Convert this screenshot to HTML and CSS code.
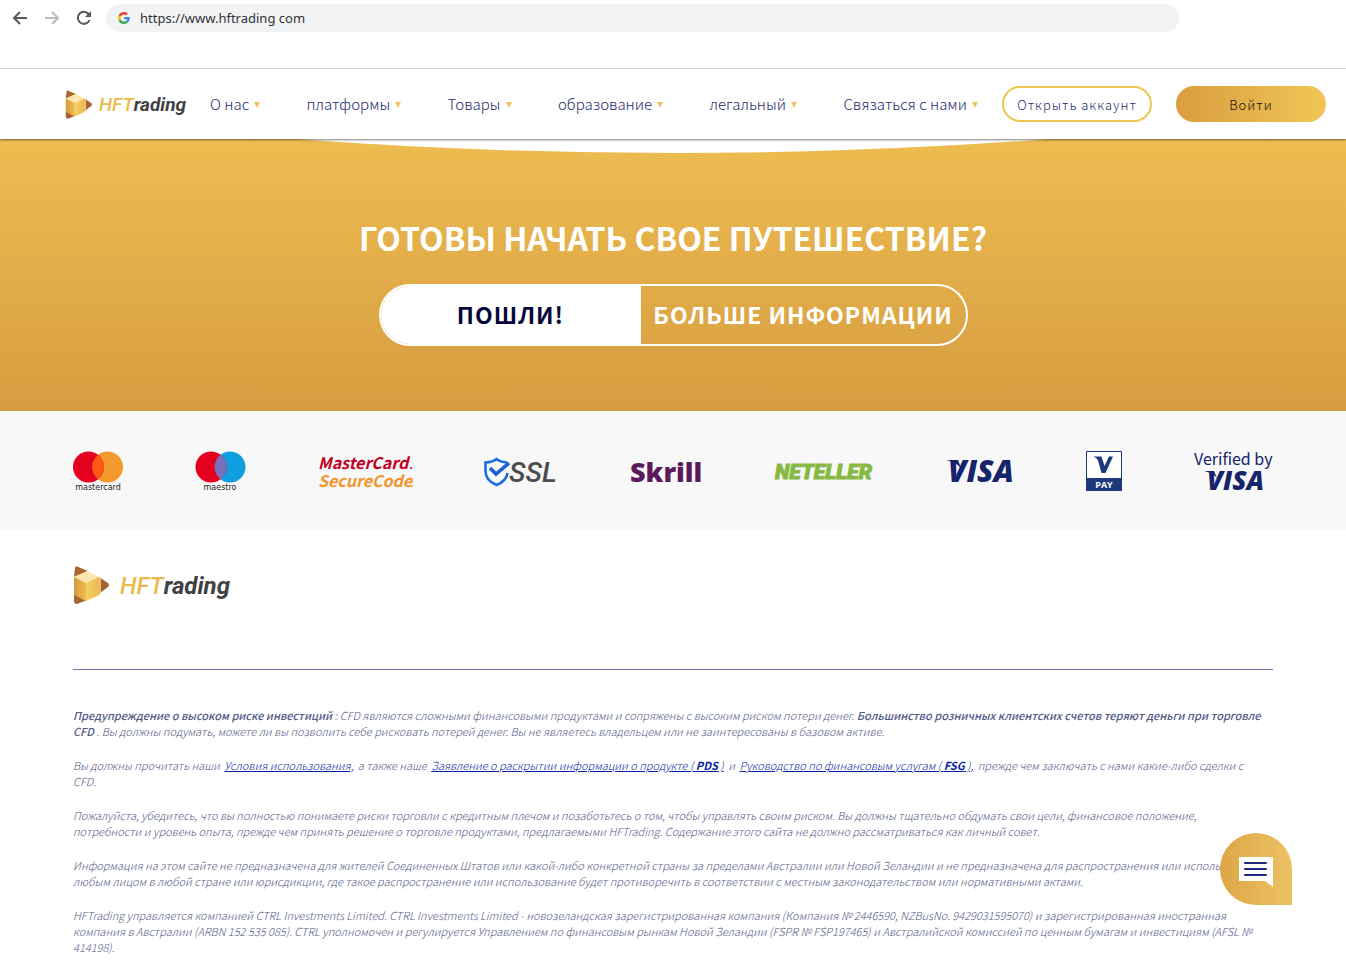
FILE: index.html
```
<!DOCTYPE html>
<html lang="ru">
<head>
<meta charset="utf-8">
<title>HFTrading</title>
<link rel="stylesheet" href="styles.css">
</head>
<body>
<svg class="defs" aria-hidden="true">
  <defs>
    <linearGradient id="face" x1="0" y1="0" x2="1" y2="0"><stop offset="0" stop-color="#f6d062"/><stop offset="1" stop-color="#edbb4c"/></linearGradient>
    <linearGradient id="side" x1="0" y1="0" x2="1" y2="0"><stop offset="0" stop-color="#d8993c"/><stop offset="1" stop-color="#eebc52"/></linearGradient>
    <symbol id="mark" viewBox="0 0 36 38">
      <path d="M2 2Q2 0 4 .5L15 5 1 11z" fill="#a9652f"/>
      <path d="M1 28l13 6-10 4Q1 38 1 35z" fill="#a9652f"/>
      <path d="M26 11l9 6q2 2 0 4l-9 7z" fill="#a9652f"/>
      <path d="M1 11L14 5l12 6-13 6z" fill="#fbe6ae"/>
      <path d="M1 11l12 6v18L1 29z" fill="url(#side)"/>
      <path d="M13 17l13-6v18l-13 6z" fill="url(#face)"/>
      <path d="M26 11l2 1.500v14L26 29z" fill="#e9c07a"/>
    </symbol>
  </defs>
</svg>

<div class="browser">
  <button class="tool" type="button" aria-label="Назад"><svg viewBox="0 0 16 16"><path d="M15 8H2M8 2L2 8l6 6"/></svg></button>
  <button class="tool tool-off" type="button" aria-label="Вперёд"><svg viewBox="0 0 16 16"><path d="M1 8h13M8 2l6 6-6 6"/></svg></button>
  <button class="tool" type="button" aria-label="Обновить"><svg viewBox="0 0 16 16"><path d="M13.500 10A6 6 0 1 1 12.500 4L14 5.500"/><path class="solid" d="M15 1v6H9z"/></svg></button>
  <div class="address">
    <svg class="g" viewBox="0 0 48 48" aria-hidden="true"><path fill="#EA4335" d="M24 9.500c3.540 0 6.710 1.220 9.210 3.600l6.850-6.850C35.900 2.380 30.470 0 24 0 14.620 0 6.510 5.380 2.560 13.220l7.980 6.190C12.430 13.720 17.740 9.500 24 9.500z"/><path fill="#4285F4" d="M46.980 24.550c0-1.570-.15-3.090-.38-4.550H24v9.020h12.940c-.58 2.960-2.260 5.480-4.780 7.180l7.730 6c4.510-4.180 7.090-10.360 7.090-17.650z"/><path fill="#FBBC05" d="M10.530 28.590c-.48-1.450-.76-2.990-.76-4.590s.27-3.140.76-4.590l-7.980-6.190C.92 16.460 0 20.120 0 24s.92 7.540 2.560 10.780z"/><path fill="#34A853" d="M24 48c6.480 0 11.930-2.130 15.890-5.810l-7.730-6c-2.150 1.450-4.920 2.300-8.160 2.300-6.260 0-11.570-4.220-13.470-9.910l-7.980 6.190C6.510 42.620 14.620 48 24 48z"/></svg>
    <input type="text" aria-label="Адрес" value="https://www.hftrading com">
  </div>
</div>

<header class="header">
  <a class="logo" href="#"><svg aria-hidden="true"><use href="#mark"/></svg><span><i>HFT</i>rading</span></a>
  <nav class="nav">
    <a href="#">О нас</a>
    <a href="#">платформы</a>
    <a href="#">Товары</a>
    <a href="#">образование</a>
    <a href="#">легальный</a>
    <a href="#">Связаться с нами</a>
  </nav>
  <button class="btn btn-line" type="button">Открыть аккаунт</button>
  <button class="btn btn-fill" type="button">Войти</button>
</header>

<main>
  <section class="hero">
    <svg class="curve" viewBox="0 0 746 14" preserveAspectRatio="none" aria-hidden="true"><path d="M0 0Q373 28 746 0z" fill="#fff"/></svg>
    <h2>ГОТОВЫ НАЧАТЬ СВОЕ ПУТЕШЕСТВИЕ?</h2>
    <div class="pill">
      <button class="go" type="button">ПОШЛИ!</button>
      <button class="more" type="button">БОЛЬШЕ ИНФОРМАЦИИ</button>
    </div>
  </section>

  <section class="payments">
    <ul>
      <li><svg width="50" height="42" viewBox="0 0 50 42"><circle cx="34.500" cy="17" r="15.500" fill="#f39a2d"/><circle cx="15.500" cy="17" r="15.500" fill="#e4001f"/><path d="M25 4.800a15.500 15.500 0 0 1 0 24.400a15.500 15.500 0 0 1 0-24.400z" fill="#ff5a14"/><text class="t-card" x="25" y="40">mastercard</text></svg></li>
      <li><svg width="51" height="42" viewBox="0 0 51 42"><circle cx="35" cy="17" r="15.500" fill="#0f9fdf"/><circle cx="16" cy="17" r="15.500" fill="#e4001f"/><path d="M25.500 4.800a15.500 15.500 0 0 1 0 24.400a15.500 15.500 0 0 1 0-24.400z" fill="#7770bb"/><text class="t-card" x="25" y="40">maestro</text></svg></li>
      <li><svg width="93" height="42" viewBox="0 0 93 42"><text class="t-mc" x="-1" y="19" fill="#c1001f">MasterCard</text><text class="t-mc" x="-1" y="37" fill="#f3952d">SecureCode</text><circle cx="92" cy="18" r="1" fill="#c1001f"/><circle cx="93" cy="36" r="1" fill="#f3952d"/></svg></li>
      <li><svg width="73" height="42" viewBox="0 0 73 42"><path d="M23 12.500Q16 12 12.500 9 9 12 1.500 12.500V21q0 9.500 11 14 10-4 11-12" fill="none" stroke="#1c6be0" stroke-width="2.600"/><path d="M6 18l6 6L25 13" fill="none" stroke="#1c5fd8" stroke-width="3.600"/><text class="t-ssl" x="25" y="32">SSL</text></svg></li>
      <li><svg width="73" height="42" viewBox="0 0 73 42"><text class="t-skrill" x="0" y="32">Skrill</text></svg></li>
      <li><svg width="99" height="42" viewBox="0 0 99 42"><text class="t-net" x="0" y="29">NETELLER</text></svg></li>
      <li><svg width="67" height="42" viewBox="0 0 67 42"><path d="M0 10h12l3 8Q9 11.500 0 10z" fill="#15246b"/><text class="t-visa" x="2" y="32">VISA</text></svg></li>
      <li><svg width="36" height="42" viewBox="0 0 36 42"><path d="M.5 1.500h35v39H.5z" fill="#fff" stroke="#1c3a7c"/><path d="M0 28h36v13H0z" fill="#1c3a7c"/><path d="M7.500 6.500h8l3 9.500 4.500-9.500h4L19.500 23h-4L12 10.500Q11 8 7.500 6.500z" fill="#1c3a7c"/><text class="t-pay" x="18" y="38">PAY</text></svg></li>
      <li><svg width="79" height="42" viewBox="0 0 79 42"><text class="t-ver" x="0" y="15">Verified by</text><path d="M10 21h10l3 7Q18 22.500 10 21z" fill="#15246b"/><text class="t-visa2" x="13" y="40">VISA</text></svg></li>
    </ul>
  </section>
</main>

<footer class="footer">
  <a class="logo logo-big" href="#"><svg aria-hidden="true"><use href="#mark"/></svg><span><i>HFT</i>rading</span></a>
  <div class="legal">
    <p><b>Предупреждение о высоком риске инвестиций</b> : CFD являются сложными финансовыми продуктами и сопряжены с высоким риском потери денег. <b>Большинство розничных клиентских счетов теряют деньги при торговле<br>CFD</b> . Вы должны подумать, можете ли вы позволить себе рисковать потерей денег. Вы не являетесь владельцем или не заинтересованы в базовом активе.</p>
    <p>Вы должны прочитать наши <a href="#">Условия использования,</a> а также наше <a href="#">Заявление о раскрытии информации о продукте ( <b>PDS</b> )</a> и <a href="#">Руководство по финансовым услугам ( <b>FSG</b> ),</a> прежде чем заключать с нами какие-либо сделки с<br>CFD.</p>
    <p>Пожалуйста, убедитесь, что вы полностью понимаете риски торговли с кредитным плечом и позаботьтесь о том, чтобы управлять своим риском. Вы должны тщательно обдумать свои цели, финансовое положение,<br>потребности и уровень опыта, прежде чем принять решение о торговле продуктами, предлагаемыми HFTrading. Содержание этого сайта не должно рассматриваться как личный совет.</p>
    <p>Информация на этом сайте не предназначена для жителей Соединенных Штатов или какой-либо конкретной страны за пределами Австралии или Новой Зеландии и не предназначена для распространения или использования любым лицом в любой стране или юрисдикции, где такое распространение или использование будет противоречить в соответствии с местным законодательством или нормативными актами.</p>
    <p>HFTrading управляется компанией CTRL Investments Limited. CTRL Investments Limited - новозеландская зарегистрированная компания (Компания № 2446590, NZBusNo. 9429031595070) и зарегистрированная иностранная компания в Австралии (ARBN 152 535 085). CTRL уполномочен и регулируется Управлением по финансовым рынкам Новой Зеландии (FSPR № FSP197465) и Австралийской комиссией по ценным бумагам и инвестициям (AFSL № 414198).</p>
  </div>
</footer>

<button class="chat" type="button" aria-label="Чат"><svg viewBox="0 0 34 30" aria-hidden="true"><path d="M0 0h34v30l-8-6H0z" fill="#fff"/><path d="M6 6h21M6 12h21M6 18h21" stroke="#1f2a7d" stroke-width="2" stroke-linecap="round"/></svg></button>
</body>
</html>
```
FILE: styles.css
```
* { box-sizing: border-box; }
body {
  margin: 0;
  background: #fff;
  color: #262b6e;
  font-family: "Noto Sans CJK SC", "Noto Sans", sans-serif;
}
button { border: 0; padding: 0; background: none; font-family: inherit; cursor: pointer; }
a { color: inherit; text-decoration: none; }
.defs { position: absolute; width: 0; height: 0; }

/* Browser bar */
.browser { display: flex; align-items: center; gap: 16px; height: 69px; padding: 4px 12px 36px; border-bottom: 1px solid #dfdfe1; }
.tool { width: 16px; height: 16px; }
.tool svg { display: block; width: 16px; height: 16px; fill: none; stroke: #55585c; stroke-width: 2; }
.tool-off svg { stroke: #b9bbbd; }
.tool .solid { fill: #55585c; stroke: none; }
.address { display: flex; align-items: center; gap: 10px; flex: 0 1 1073px; height: 28px; margin-left: -2px; padding: 0 12px; border-radius: 14px; background: #f1f3f4; }
.g { width: 12px; height: 12px; flex: none; }
.address input { flex: 1; border: 0; padding: 0; background: none; color: #303236; font: 13px/20px "Noto Sans", sans-serif; outline: 0; }

/* Site header */
.header { position: relative; display: flex; align-items: center; gap: 24px; height: 70px; padding: 0 20px 0 65px; background: #fff; box-shadow: 0 1px 2px rgba(0, 0, 0, .5); }
.logo { display: flex; align-items: center; gap: 7px; color: #414143; font: italic 700 19px/24px Roboto, sans-serif; }
.logo svg { width: 27px; height: 29px; }
.logo span { padding-top: 2px; }
.logo i { color: #ecba4b; font-weight: 500; }
.logo-big { gap: 11px; font-size: 24px; }
.logo-big svg { width: 36px; height: 38px; }
.nav { flex: 1; display: flex; justify-content: space-between; color: #262b6e; font-size: 15px; font-weight: 300; line-height: 24px; white-space: nowrap; }
.nav a { display: flex; align-items: center; gap: 5px; }
.nav a::after { content: ""; margin-top: 2px; border: solid transparent; border-width: 6px 3px 0; border-top-color: #edc55c; }
.btn { width: 150px; height: 36px; border-radius: 18px; font-size: 13px; font-weight: 300; letter-spacing: 1px; white-space: nowrap; }
.btn-line { border: 2px solid #edc64f; color: #262b6e; }
.btn-fill { background: linear-gradient(90deg, #d89d40, #f0c656); color: #111; }

/* Call to action */
.hero { display: flex; flex-direction: column; align-items: center; height: 272px; background: linear-gradient(#edbd51, #d79c40); }
.curve { width: 56%; height: 14px; }
.hero h2 { margin: 60px 0 23px; color: #fff; font-size: 32px; font-weight: 700; line-height: 48px; text-align: center; }
.pill { display: flex; width: 589px; height: 62px; border: 2px solid #fff; border-radius: 31px; overflow: hidden; }
.pill button { padding-bottom: 2px; font-size: 23px; font-weight: 700; letter-spacing: 1px; white-space: nowrap; }
.go { flex: 4; background: #fff; color: #06083a; }
.more { flex: 5; color: #fff; }

/* Payment marks */
.payments { padding: 39px 40px 38px; background: #f8f8f8; }
.payments ul { display: flex; justify-content: space-between; max-width: 1200px; margin: 0 auto; padding: 0; list-style: none; }
.payments svg { display: block; overflow: visible; }
.t-card { fill: #222; font: 8px "DejaVu Sans", sans-serif; text-anchor: middle; }
.t-mc { font: italic 700 16px "Noto Sans CJK SC", sans-serif; }
.t-ssl { fill: #4c4c4e; font: italic 500 28px Roboto, sans-serif; }
.t-skrill { fill: #5a1a5c; font: 800 27px "Open Sans", sans-serif; }
.t-net { fill: #86b943; stroke: #86b943; font: italic 900 21px Roboto, sans-serif; }
.t-visa { fill: #15246b; font: italic 800 30px "Open Sans", sans-serif; }
.t-visa2 { fill: #15246b; font: italic 800 26px "Open Sans", sans-serif; }
.t-pay { fill: #fff; font: 700 9px "Open Sans", sans-serif; text-anchor: middle; }
.t-ver { fill: #15246b; font: 16px "Noto Sans CJK SC", sans-serif; }

/* Footer */
.footer { max-width: 1280px; margin: 0 auto; padding: 36px 40px 17px; }
.legal { margin-top: 65px; padding-top: 37px; border-top: 1px solid #7477b0; color: #545a88; font-size: 11px; font-style: italic; font-weight: 300; line-height: 16px; }
.legal p { margin: 0 0 18px; }
.legal p:last-child { margin-bottom: 0; }
.legal b { font-weight: 500; }
.legal a { margin: 0 2px; color: #0b1fa8; text-decoration: underline; }
.legal a b { font-weight: 700; }

/* Chat launcher */
.chat { position: fixed; right: 54px; bottom: 68px; display: flex; align-items: center; justify-content: center; width: 72px; height: 72px; padding-top: 6px; border-radius: 50% 50% 0 50%; background: linear-gradient(90deg, #dda646, #edc264); }
.chat svg { width: 34px; height: 30px; }
```
